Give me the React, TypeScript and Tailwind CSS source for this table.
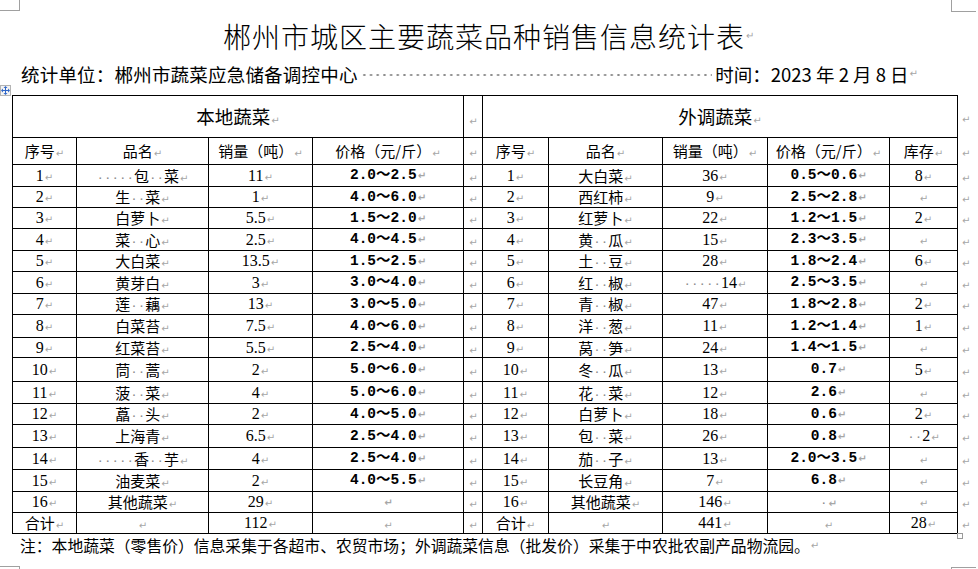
import React from 'react';

const cjk = "font-['Noto_Sans_CJK_SC',sans-serif]";
const serif = "font-['Liberation_Serif','Noto_Sans_CJK_SC',serif] text-[16px]";
const mono = "font-['Liberation_Mono','Noto_Sans_CJK_SC',monospace] text-[14.5px] font-bold";

function P() {
  return <span className="ml-[1px] text-[10px] leading-none text-[#a6a6a6] font-['DejaVu_Sans',sans-serif]">↵</span>;
}

// "·" in a string is a Word space marker
function T({ s }: { s: string }) {
  const parts: React.ReactNode[] = [];
  let buf = '';
  const flush = () => {
    if (buf) parts.push(<span key={parts.length}>{buf}</span>);
    buf = '';
  };
  for (const ch of s) {
    if (ch === '·') {
      flush();
      parts.push(
        <span
          key={parts.length}
          className="inline-block w-[7.5px] text-center text-[15px] font-normal text-[#8c8c8c] font-['Liberation_Sans',sans-serif]"
        >
          ·
        </span>
      );
    } else buf += ch;
  }
  flush();
  return (
    <>
      {parts}
      <P />
    </>
  );
}

type Row = {
  h: number;
  ln: string; lq: string; lp: string;
  rn: string; rq: string; rp: string; st: string;
};

const rows: Row[] = [
  { h: 22, ln: '·····包··菜', lq: '11', lp: '2.0～2.5', rn: '大白菜', rq: '36', rp: '0.5～0.6', st: '8' },
  { h: 21, ln: '生··菜', lq: '1', lp: '4.0～6.0', rn: '西红柿', rq: '9', rp: '2.5～2.8', st: '' },
  { h: 21, ln: '白萝卜', lq: '5.5', lp: '1.5～2.0', rn: '红萝卜', rq: '22', rp: '1.2～1.5', st: '2' },
  { h: 22, ln: '菜··心', lq: '2.5', lp: '4.0～4.5', rn: '黄··瓜', rq: '15', rp: '2.3～3.5', st: '' },
  { h: 21, ln: '大白菜', lq: '13.5', lp: '1.5～2.5', rn: '土··豆', rq: '28', rp: '1.8～2.4', st: '6' },
  { h: 22, ln: '黄芽白', lq: '3', lp: '3.0～4.0', rn: '红··椒', rq: '·····14', rp: '2.5～3.5', st: '' },
  { h: 21, ln: '莲··藕', lq: '13', lp: '3.0～5.0', rn: '青··椒', rq: '47', rp: '1.8～2.8', st: '2' },
  { h: 23, ln: '白菜苔', lq: '7.5', lp: '4.0～6.0', rn: '洋··葱', rq: '11', rp: '1.2～1.4', st: '1' },
  { h: 20, ln: '红菜苔', lq: '5.5', lp: '2.5～4.0', rn: '莴··笋', rq: '24', rp: '1.4～1.5', st: '' },
  { h: 24, ln: '茼··蒿', lq: '2', lp: '5.0～6.0', rn: '冬··瓜', rq: '13', rp: '0.7', st: '5' },
  { h: 22, ln: '菠··菜', lq: '4', lp: '5.0～6.0', rn: '花··菜', rq: '12', rp: '2.6', st: '' },
  { h: 21, ln: '藠··头', lq: '2', lp: '4.0～5.0', rn: '白萝卜', rq: '18', rp: '0.6', st: '2' },
  { h: 23, ln: '上海青', lq: '6.5', lp: '2.5～4.0', rn: '包··菜', rq: '26', rp: '0.8', st: '··2' },
  { h: 22, ln: '·····香··芋', lq: '4', lp: '2.5～4.0', rn: '茄··子', rq: '13', rp: '2.0～3.5', st: '' },
  { h: 22, ln: '油麦菜', lq: '2', lp: '4.0～5.5', rn: '长豆角', rq: '7', rp: '6.8', st: '' },
  { h: 21, ln: '其他蔬菜', lq: '29', lp: '', rn: '其他蔬菜', rq: '146', rp: '·', st: '' },
];

const td = 'border border-black p-0 text-center align-middle whitespace-nowrap leading-none';
const end = 'pl-[3px] align-middle leading-none';

function MoveHandle() {
  return (
    <div className="absolute left-0 top-[85px] flex h-[11px] w-[11px] items-center justify-center border border-[#b4b4b4] bg-[#f4f4f4]">
      <svg width="9" height="9" viewBox="0 0 9 9" fill="#2f66c8">
        <rect x="4" y="1" width="1" height="7" />
        <rect x="1" y="4" width="7" height="1" />
        <path d="M4.5 0 L6.5 2 L2.5 2 Z M4.5 9 L2.5 7 L6.5 7 Z M0 4.5 L2 2.5 L2 6.5 Z M9 4.5 L7 6.5 L7 2.5 Z" />
      </svg>
    </div>
  );
}

export default function App() {
  return (
    <div className={`relative h-[569px] w-[978px] overflow-hidden bg-white text-black ${cjk}`}>
      {/* page corner marks */}
      <div className="absolute left-0 top-0 h-[11px] w-[20px] border-b border-r border-[#a0a0a0]" />
      <div className="absolute left-[951px] top-0 h-[12px] w-[25px] border-b border-l border-[#a0a0a0]" />
      <div className="absolute left-0 top-[566px] h-[3px] w-[20px] border-r border-t border-[#a0a0a0]" />
      <div className="absolute left-[951px] top-[567px] h-[2px] w-[25px] border-l border-t border-[#a0a0a0]" />
      <MoveHandle />
      <div className="absolute left-[957px] top-[533px] h-[6px] w-[6px] border border-[#9a9a9a] bg-white" />

      <div className="box-content flex h-[40px] items-center justify-center pt-[16px] text-[28px] font-light tracking-[1px] leading-none">
        郴州市城区主要蔬菜品种销售信息统计表<P />
      </div>

      <div className="mt-[6px] flex h-[24px] items-center pl-[21px] pr-[60px] text-[18.5px] leading-none">
        <span className="tracking-[0.2px]">统计单位：郴州市蔬菜应急储备调控中心</span>
        <span className="mx-[3px] mt-[2px] h-[4px] flex-1 bg-[radial-gradient(circle,#8a8a8a_0.9px,transparent_1.4px)] bg-size-[6.7px_4px] bg-repeat-x" />
        <span>时间：2023 年 2 月 8 日</span>
        <P />
      </div>

      <table className="ml-[12px] mt-[9px] table-fixed border-collapse text-[15px]">
        <colgroup>
          <col className="w-[64px]" />
          <col className="w-[132px]" />
          <col className="w-[104px]" />
          <col className="w-[151px]" />
          <col className="w-[19px]" />
          <col className="w-[66px]" />
          <col className="w-[114px]" />
          <col className="w-[105px]" />
          <col className="w-[122px]" />
          <col className="w-[68px]" />
          <col className="w-[16px]" />
        </colgroup>
        <tbody>
          <tr className="h-[42px]">
            <td colSpan={4} className={`${td} text-[18.5px]`}>本地蔬菜<P /></td>
            <td className={`${td} pt-[5px]`}><P /></td>
            <td colSpan={5} className={`${td} text-[18.5px]`}>外调蔬菜<P /></td>
            <td className={end}><P /></td>
          </tr>
          <tr className="h-[27px]">
            <td className={td}>序号<P /></td>
            <td className={td}>品名<P /></td>
            <td className={td}>销量（吨）<P /></td>
            <td className={td}>价格（元/斤）<P /></td>
            <td className={td}><P /></td>
            <td className={td}>序号<P /></td>
            <td className={td}>品名<P /></td>
            <td className={td}>销量（吨）<P /></td>
            <td className={td}>价格（元/斤）<P /></td>
            <td className={td}>库存<P /></td>
            <td className={end}><P /></td>
          </tr>
          {rows.map((r, i) => (
            <tr key={i} style={{ height: r.h }}>
              <td className={`${td} ${serif}`}><T s={String(i + 1)} /></td>
              <td className={td}><T s={r.ln} /></td>
              <td className={`${td} ${serif}`}><T s={r.lq} /></td>
              <td className={`${td} ${mono}`}><T s={r.lp} /></td>
              <td className={td}><P /></td>
              <td className={`${td} ${serif}`}><T s={String(i + 1)} /></td>
              <td className={td}><T s={r.rn} /></td>
              <td className={`${td} ${serif}`}><T s={r.rq} /></td>
              <td className={`${td} ${mono}`}><T s={r.rp} /></td>
              <td className={`${td} ${serif}`}><T s={r.st} /></td>
              <td className={end}><P /></td>
            </tr>
          ))}
          <tr className="h-[21px]">
            <td className={td}>合计<P /></td>
            <td className={td}><P /></td>
            <td className={`${td} ${serif}`}>112<P /></td>
            <td className={td}><P /></td>
            <td className={td}><P /></td>
            <td className={td}>合计<P /></td>
            <td className={td}><P /></td>
            <td className={`${td} ${serif}`}>441<P /></td>
            <td className={td}><P /></td>
            <td className={`${td} ${serif}`}>28<P /></td>
            <td className={end}><P /></td>
          </tr>
        </tbody>
      </table>

      <div className="mt-[1px] flex h-[22px] items-center pl-[20px] text-[15.8px] leading-none">
        注：本地蔬菜（零售价）信息采集于各超市、农贸市场；外调蔬菜信息（批发价）采集于中农批农副产品物流园。<P />
      </div>
    </div>
  );
}
